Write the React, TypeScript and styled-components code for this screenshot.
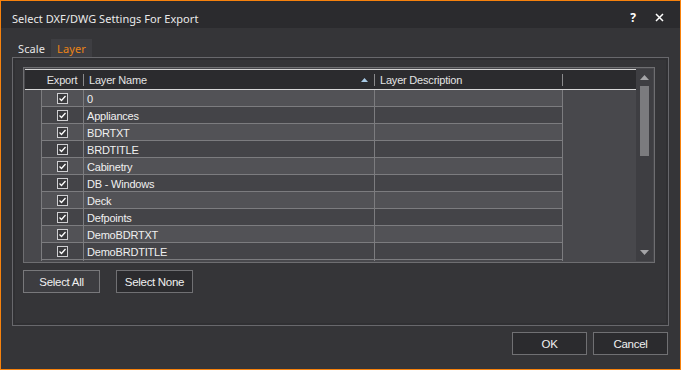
import React from "react";
import styled, { createGlobalStyle } from "styled-components";

const Global = createGlobalStyle`
  html, body { margin: 0; padding: 0; background: #353538; }
  * { box-sizing: border-box; }
`;

const Window = styled.div`
  width: 681px;
  height: 370px;
  border: 1px solid #f7820d;
  background: #353538;
  display: flex;
  flex-direction: column;
  font-family: "Liberation Sans", Arial, sans-serif;
  color: #ececec;
  overflow: hidden;
`;

const TitleBar = styled.div`
  height: 27px;
  background: #2b2b2e;
  display: flex;
  align-items: center;
  padding: 6px 16px 0 11px;
  font-family: "Noto Sans", sans-serif;
  font-size: 11px;
  letter-spacing: 0.05px;
  color: #eaeaea;
`;

const TitleText = styled.div`
  flex: 1;
  padding-top: 2px;
`;

const TitleButtons = styled.div`
  display: flex;
  align-items: center;
  gap: 19px;
`;

const Help = styled.span`
  font-weight: 700;
  font-size: 12px;
  color: #ffffff;
`;

const Body = styled.div`
  flex: 1;
  display: flex;
  flex-direction: column;
  padding: 11px 11px 0 11px;
`;

const Tabs = styled.div`
  display: flex;
  height: 18px;
`;

const Tab = styled.div<{ $active?: boolean }>`
  padding: 0 6px;
  display: flex;
  align-items: center;
  font-family: "Noto Sans", sans-serif;
  font-size: 11px;
  letter-spacing: 0.1px;
  background: ${(p) => (p.$active ? "#3e3e42" : "transparent")};
  color: ${(p) => (p.$active ? "#ec8416" : "#e6e6e6")};
`;

const Panel = styled.div`
  width: 657px;
  height: 269px;
  border: 1px solid #68686c;
  box-shadow: inset 0 0 0 2px #303033;
  padding: 9px 13px 0 10px;
  display: flex;
  flex-direction: column;
`;

const Grid = styled.div`
  width: 632px;
  height: 196px;
  border: 1px solid #6e6e71;
  padding: 1px;
  background: #48484c;
  display: flex;
`;

const TableArea = styled.div`
  flex: 1;
  display: flex;
  flex-direction: column;
  overflow: hidden;
`;

const HeaderRow = styled.div`
  height: 21px;
  flex: none;
  border-top: 1px solid #d8d8d8;
  border-bottom: 1px solid #d8d8d8;
  background: #2b2b2e;
  display: flex;
  align-items: center;
  font-size: 11px;
  letter-spacing: -0.2px;
  color: #e4e4e4;
`;

const HeaderCell = styled.div<{ $w: number; $center?: boolean }>`
  width: ${(p) => p.$w}px;
  flex: none;
  height: 100%;
  display: flex;
  align-items: center;
  justify-content: ${(p) => (p.$center ? "center" : "flex-start")};
  padding-left: ${(p) => (p.$center ? 0 : 5)}px;
  padding-right: 0;
`;

const HeaderSep = styled.div`
  width: 1px;
  height: 12px;
  flex: none;
  background: #8a8a8c;
`;

const SortArrow = styled.svg`
  margin-left: auto;
  margin-right: 6px;
`;

const Row = styled.div<{ $alt: boolean }>`
  display: flex;
  height: 17px;
  flex: none;
  font-size: 11px;
  letter-spacing: -0.2px;
  color: #f0f0f0;
  --cell: ${(p) => (p.$alt ? "#444448" : "#525256")};
`;

const Filler = styled.div`
  display: flex;
  flex: 1;
`;

const RowHead = styled.div`
  width: 16px;
  flex: none;
`;

const Cell = styled.div<{ $w: number; $last?: boolean; $line?: boolean }>`
  width: ${(p) => p.$w}px;
  flex: none;
  background: var(--cell, transparent);
  border-left: 1px solid #7c7c7f;
  border-right: ${(p) => (p.$last ? "1px solid #7c7c7f" : "none")};
  border-bottom: ${(p) => (p.$line ? "1px solid #7c7c7f" : "none")};
  display: flex;
  align-items: center;
  padding-left: 3px;
  padding-top: 1px;
  white-space: nowrap;
`;

const CheckCell = styled(Cell)`
  justify-content: center;
  padding-left: 0;
  padding-top: 0;
`;

const CheckBox = styled.div`
  width: 11px;
  height: 11px;
  border: 1px solid #cfcfd2;
  background: #3a3a3d;
  display: flex;
  align-items: center;
  justify-content: center;
`;

const ScrollBar = styled.div`
  width: 17px;
  flex: none;
  background: #3e3e42;
  display: flex;
  flex-direction: column;
  align-items: center;
`;

const ScrollArrow = styled.div`
  height: 17px;
  width: 17px;
  flex: none;
  display: flex;
  align-items: center;
  justify-content: center;
`;

const Thumb = styled.div`
  width: 9px;
  height: 70px;
  background: #7b7b7e;
`;

const ScrollSpace = styled.div`
  flex: 1;
`;

const ButtonRow = styled.div<{ $end?: boolean }>`
  display: flex;
  gap: ${(p) => (p.$end ? 6 : 16)}px;
  margin-top: ${(p) => (p.$end ? 6 : 7)}px;
  justify-content: ${(p) => (p.$end ? "flex-end" : "flex-start")};
  padding-right: ${(p) => (p.$end ? 1 : 0)}px;
`;

const Button = styled.button<{ $w: number; $light?: boolean }>`
  width: ${(p) => p.$w}px;
  height: 23px;
  border: 1px solid ${(p) => (p.$light ? "#78787b" : "#707073")};
  background: ${(p) => (p.$light ? "#3d3d41" : "#2b2b2e")};
  color: #f0f0f0;
  font-family: "Liberation Sans", Arial, sans-serif;
  font-size: 11.5px;
  letter-spacing: -0.3px;
  padding: 0;
  display: flex;
  align-items: center;
  justify-content: center;
`;

const layers = [
  "0",
  "Appliances",
  "BDRTXT",
  "BRDTITLE",
  "Cabinetry",
  "DB - Windows",
  "Deck",
  "Defpoints",
  "DemoBDRTXT",
  "DemoBRDTITLE",
];

const Check = () => (
  <CheckBox>
    <svg width="9" height="9" viewBox="0 0 9 9">
      <path d="M1.5 4.5 L3.5 6.5 L7.5 2" stroke="#ffffff" strokeWidth="1.3" fill="none" />
    </svg>
  </CheckBox>
);

export default function App() {
  return (
    <>
      <Global />
      <Window>
        <TitleBar>
          <TitleText>Select DXF/DWG Settings For Export</TitleText>
          <TitleButtons>
            <Help>?</Help>
            <svg width="9" height="9" viewBox="0 0 9 9">
              <path d="M1 1 L8 8 M8 1 L1 8" stroke="#ffffff" strokeWidth="1.5" />
            </svg>
          </TitleButtons>
        </TitleBar>
        <Body>
          <Tabs>
            <Tab>Scale</Tab>
            <Tab $active>Layer</Tab>
          </Tabs>
          <Panel>
            <Grid>
              <TableArea>
                <HeaderRow>
                  <HeaderCell $w={16} />
                  <HeaderCell $w={42} $center>Export</HeaderCell>
                  <HeaderSep />
                  <HeaderCell $w={290}>
                    Layer Name
                    <SortArrow width="7" height="4" viewBox="0 0 7 4">
                      <path d="M0 4 L3.5 0 L7 4 Z" fill="#a9cbe6" />
                    </SortArrow>
                  </HeaderCell>
                  <HeaderSep />
                  <HeaderCell $w={187}>Layer Description</HeaderCell>
                  <HeaderSep />
                </HeaderRow>
                {layers.map((name, i) => (
                  <Row key={name} $alt={i % 2 === 1}>
                    <RowHead />
                    <CheckCell $w={42} $line>
                      <Check />
                    </CheckCell>
                    <Cell $w={291} $line>{name}</Cell>
                    <Cell $w={189} $line $last />
                  </Row>
                ))}
                <Filler>
                  <RowHead />
                  <Cell $w={42} />
                  <Cell $w={291} />
                  <Cell $w={189} $last />
                </Filler>
              </TableArea>
              <ScrollBar>
                <ScrollArrow>
                  <svg width="9" height="5" viewBox="0 0 9 5">
                    <path d="M0 5 L4.5 0 L9 5 Z" fill="#a4a4a7" />
                  </svg>
                </ScrollArrow>
                <Thumb />
                <ScrollSpace />
                <ScrollArrow>
                  <svg width="9" height="5" viewBox="0 0 9 5">
                    <path d="M0 0 L4.5 5 L9 0 Z" fill="#a4a4a7" />
                  </svg>
                </ScrollArrow>
              </ScrollBar>
            </Grid>
            <ButtonRow>
              <Button $w={77} $light>Select All</Button>
              <Button $w={77}>Select None</Button>
            </ButtonRow>
          </Panel>
          <ButtonRow $end>
            <Button $w={75}>OK</Button>
            <Button $w={75}>Cancel</Button>
          </ButtonRow>
        </Body>
      </Window>
    </>
  );
}
